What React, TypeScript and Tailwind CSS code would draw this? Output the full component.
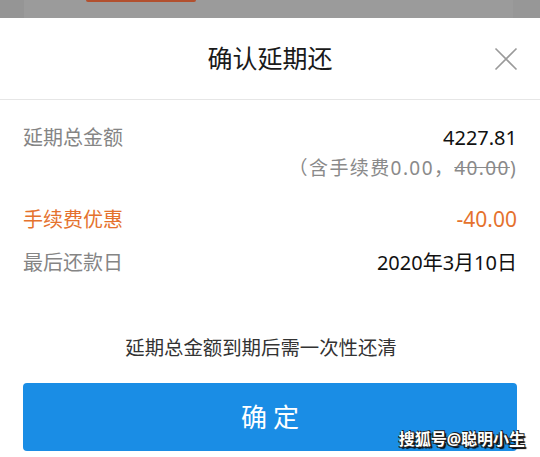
export default function App() {
  const font = { fontFamily: '"Noto Sans", "Noto Sans CJK SC", sans-serif' };
  return (
    <div className="w-[540px] h-[457px] bg-white overflow-hidden flex flex-col" style={font}>
      {/* dimmed page behind sheet */}
      <div className="h-[18px] flex bg-[#9b9b9b]">
        <div className="w-[24px] bg-[#959595]" />
        <div className="flex-1 flex">
          <div className="ml-[62px] w-[110px] h-[2px] rounded-b-[3px] bg-[#b2502f]" />
        </div>
        <div className="w-[27px] bg-[#979797]" />
      </div>
      {/* header */}
      <div className="h-[82px] grid grid-cols-[1fr_auto_1fr] items-center border-b border-[#e6e6e6]">
        <div />
        <div className="text-[25px] leading-none text-[#1a1a1a]">确认延期还</div>
        <div className="flex justify-end pr-[22px]">
          <svg width="24" height="24" viewBox="0 0 24 24" className="mt-[1px]">
            <path d="M1.5 1.5 L22.5 22.5 M22.5 1.5 L1.5 22.5" stroke="#9a9a9a" strokeWidth="1.6" fill="none" />
          </svg>
        </div>
      </div>
      {/* body */}
      <div className="px-[23px] pt-[23px] flex flex-col">
        <div className="flex justify-between items-center h-[30px] text-[20px]">
          <span className="text-[#858585]">延期总金额</span>
          <span className="text-[#111]">4227.81</span>
        </div>
        <div className="flex justify-end items-center h-[30px] text-[19px] tracking-[1.4px] text-[#8a8a8a]">
          <span>（含手续费0.00，<span className="line-through">40.00</span>)</span>
        </div>
        <div className="flex justify-between items-center h-[30px] mt-[22px] text-[20px] text-[#e5722d]">
          <span>手续费优惠</span>
          <span className="text-[21px]">-40.00</span>
        </div>
        <div className="flex justify-between items-center h-[30px] mt-[13px] text-[20px]">
          <span className="text-[#858585]">最后还款日</span>
          <span className="text-[#111]">2020年3月10日</span>
        </div>
        <div className="flex justify-center items-center h-[30px] mt-[55px] pr-[18px] text-[19.4px] text-[#333]">
          延期总金额到期后需一次性还清
        </div>
        <div className="relative mt-[20px] h-[68px] rounded-[4px] bg-[#1a8de5] flex items-center justify-center">
          <span className="text-white text-[26px] tracking-[6px] pl-[6px]">确定</span>
          <span
            className="absolute right-[-8px] bottom-[4px] text-white text-[16px] font-bold leading-none"
            style={{ textShadow: '1px 1px 0 #222, -1px 1px 0 #222, 1px -1px 0 #222, 2px 2px 1px #000' }}
          >
            搜狐号@聪明小生
          </span>
        </div>
      </div>
    </div>
  );
}
